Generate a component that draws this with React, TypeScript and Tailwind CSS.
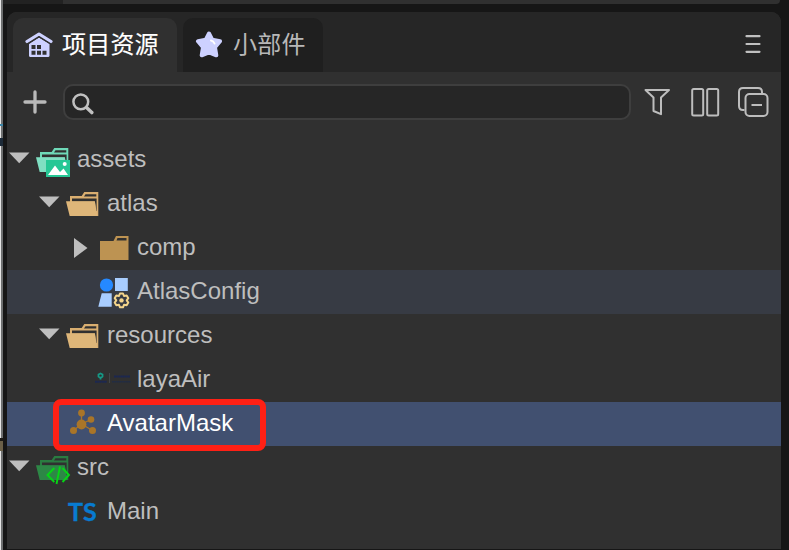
import React from "react";

type RowProps = {
  label: string;
  indent: string;
  arrow?: "open" | "closed";
  icon: React.ReactNode;
  tone?: string;
};

const Icon = ({ children }: { children: React.ReactNode }) => (
  <svg className="h-11 w-10 shrink-0" viewBox="0 0 40 44">{children}</svg>
);

const OpenFolder = ({ back, front }: { back: string; front: string }) => (
  <>
    <path fill={back} fillRule="evenodd" d="M7 14H18.700L21.300 10H35.300V34H10L7 20ZM22.500 12.200L21 14.500H33.300V12.200ZM9 16.400V19.500H32L33 29H33.600V16.400Z" />
    <path fill={front} d="M3 19.300H31.800L34.300 34H6.700Z" />
  </>
);

const AssetsIcon = () => (
  <Icon>
    <OpenFolder back="#6fd9b8" front="#7fdfc2" />
    <path fill="#26c795" d="M13 22H37V39H13Z" />
    <path fill="#fff" d="M15 37L22 27.500L27 34L30.500 30.500L35 37Z" />
    <circle cx="31.700" cy="26" r="2" fill="#fff" />
  </Icon>
);

const TanFolderIcon = () => (
  <Icon><OpenFolder back="#d9ae70" front="#deb679" /></Icon>
);

const ClosedFolderIcon = () => (
  <Icon>
    <path fill="#bd9352" fillRule="evenodd" d="M7 15H20.500L23 10H35.500V34H7ZM24.500 12L23.500 14.500H33.500V12Z" />
  </Icon>
);

const AtlasIcon = () => (
  <Icon>
    <circle cx="13.500" cy="15" r="6.600" fill="#2589ff" />
    <path fill="#a8cdff" d="M22 8H34.800V21H22ZM8.700 23.200H18.700V36.800H5.300Z" />
    <path fill="none" stroke="#f4d58b" strokeWidth="2" strokeLinejoin="round" d="M27 23.500H30L31 26L33.700 25.600L35.300 28.200L33.700 30.400L35.300 32.600L33.700 35.200L31 34.800L30 37.300H27L26 34.800L23.300 35.200L21.700 32.600L23.300 30.400L21.700 28.200L23.300 25.600L26 26Z" />
    <circle cx="28.500" cy="30.400" r="2.200" fill="#f4d58b" />
  </Icon>
);

const LayaIcon = () => (
  <Icon>
    <path fill="none" stroke="#159986" strokeWidth="1.800" d="M7.500 21.500V20L5.500 18.500V16.500L7.500 15.500L9.500 16.500V18.500L7.500 20" />
    <path stroke="#1b2752" strokeWidth="2" strokeDasharray="2 .3" d="M2 23.800H14M21 18.400H37" />
    <path stroke="#202c46" strokeWidth="1.500" strokeDasharray="1.500 .4" d="M19 23.800H38" />
    <path stroke="#42464a" strokeWidth="1" d="M16.500 15V25" />
  </Icon>
);

const MaskIcon = () => (
  <Icon>
    <path fill="none" stroke="#a97528" strokeWidth="1.300" d="M18.500 11V22L28 17.500M18.500 22L10.500 28.500M18.500 22L29.500 28.500" />
    <g fill="#a97528">
      <circle cx="18.500" cy="22.500" r="4.900" />
      <circle cx="18.500" cy="11" r="3.400" />
      <circle cx="28" cy="17.500" r="3.300" />
      <circle cx="10.500" cy="28.500" r="3.500" />
      <circle cx="29.500" cy="28.500" r="3.500" />
    </g>
  </Icon>
);

const SrcIcon = () => (
  <Icon>
    <OpenFolder back="#2a7c41" front="#2d8746" />
    <path fill="none" stroke="#06d615" strokeWidth="1.900" d="M21.300 22L14.500 29L21.300 36M29.500 22L36 29L29.500 36M27 20.500L23.500 38" />
  </Icon>
);

const TsIcon = () => (
  <div className="flex h-11 w-10 shrink-0 items-center pb-0.5 pl-[5px] font-[Lato,sans-serif] text-[25px] font-bold leading-none text-[#087bd0] [-webkit-text-stroke:0.4px_#087bd0]">TS</div>
);

const Row = ({ label, indent, arrow, icon, tone = "text-[#bebebe]" }: RowProps) => (
  <div className={`flex h-11 w-full shrink-0 items-center ${indent} ${tone}`}>
    <svg className="h-11 w-[26px] shrink-0" viewBox="0 0 26 44" fill="#bebebe">
      {arrow === "open" && <path d="M2 14.500H22.500L12.200 25.300Z" />}
      {arrow === "closed" && <path d="M7 12V32L20.500 22Z" />}
    </svg>
    {icon}
    <span className="-mt-0.5 ml-1 text-2xl leading-none">{label}</span>
  </div>
);

export default function App() {
  return (
    <div className="relative flex h-[550px] w-[789px] overflow-hidden bg-[#161616] font-['Liberation_Sans','Noto_Sans_CJK_SC',sans-serif]">
      <div className="flex h-full w-[3px] shrink-0 flex-col border-r-2 border-[#6d6f70] bg-[#e5e5e5]">
        <div className="mt-[124px] h-0.5 w-[3px] shrink-0 bg-[#3b86a8]" />
        <div className="mt-3 h-2 w-[3px] shrink-0 bg-[#1c2a38]" />
        <div className="mt-[292px] h-[3px] w-[3px] shrink-0 bg-[#1c1a17]" />
        <div className="h-2.5 w-[3px] shrink-0 bg-[#6b6048]" />
      </div>
      <div className="flex min-w-0 flex-1 flex-col">
        <div className="flex h-1 w-[777px] shrink-0 overflow-hidden rounded-br bg-[#303030]">
          <div className="w-[60px] bg-[#222222]" />
        </div>
        <main className="ml-1 mt-2 flex h-[537px] w-[774px] shrink-0 flex-col overflow-hidden rounded-t-[10px] bg-[#303030]">
          <header className="flex h-[60px] shrink-0 items-end bg-[#262626] pl-1.5">
            <div className="flex h-[54px] w-[164px] items-center rounded-t-[10px] bg-[#303030] pl-3 text-white">
              <svg className="size-7" viewBox="0 0 28 28">
                <path d="M2 10.500L14 3L26 10.500" fill="none" stroke="#cdd1ff" strokeWidth="3.200" strokeLinecap="round" strokeLinejoin="round" />
                <path fill="#cdd1ff" d="M14 6.500L24.500 13V24.500Q24.500 26 23 26H5.500Q4 26 4 24.500V13Z" />
                <path fill="none" stroke="#303030" strokeWidth="1" d="M2.500 13L14 6L25.500 13" />
                <path fill="#303030" d="M6.500 14H10.500V18H6.500ZM12 14H16V18H12ZM6.500 19.700H10.500V23.700H6.500ZM12 19.700H16V23.700H12ZM17.500 19.700H21.500V23.700H17.500Z" />
              </svg>
              <span className="ml-[9px] text-2xl leading-9 tracking-[0.2px] [-webkit-text-stroke:0.15px_white]">项目资源</span>
            </div>
            <div className="ml-1.5 flex h-[54px] w-[140px] items-center rounded-t-[10px] bg-[#1f1f1f] pl-3 text-[#b8b8b8]">
              <svg className="size-7" viewBox="0 0 28 28">
                <path d="M14 2.500L17.200 8.700L25 10.300L20 16.300L21.300 24.300L14 21.300L6.700 24.300L8 16.300L3 10.300L10.800 8.700Z" fill="#cdd1ff" stroke="#cdd1ff" strokeWidth="4" strokeLinejoin="round" />
                <path d="M16 9.500Q18.500 10 19.500 12.500" fill="none" stroke="#fff" strokeWidth="2" strokeLinecap="round" />
              </svg>
              <span className="ml-[10px] text-2xl leading-9 tracking-[0.2px]">小部件</span>
            </div>
            <svg className="mb-[15px] ml-auto mr-5 h-6 w-4" viewBox="0 0 16 24" stroke="#c0c0c0" strokeWidth="2.200" strokeLinecap="round">
              <path d="M1.500 3.200H14.500M1.500 11H14.500M1.500 18.800H14.500" />
            </svg>
          </header>
          <div className="flex h-[66px] shrink-0 items-start pl-4 pt-3">
            <svg className="mt-1.5 size-6 shrink-0" viewBox="0 0 24 24" stroke="#b9b9b9" strokeWidth="3.300" strokeLinecap="round">
              <path d="M2 12H22M12 2V22" />
            </svg>
            <div className="ml-4 flex h-9 w-[568px] shrink-0 items-center rounded-[10px] border-2 border-[#3e3e3e] bg-[#262626] pl-1.5">
              <svg className="mt-0.5 size-6" viewBox="0 0 24 24" fill="none" stroke="#c0c0c0">
                <circle cx="9.800" cy="10.800" r="7.400" strokeWidth="2.500" />
                <path d="M15.800 16.800L20.800 21.600" strokeWidth="3.500" strokeLinecap="round" />
              </svg>
            </div>
            <svg className="ml-3 h-9 w-[126px] shrink-0" viewBox="0 0 126 36" fill="none" stroke="#bdbdbd" strokeWidth="2">
              <path d="M2.500 6H26L18 13.500V30.200L10.500 27V13.500Z" strokeLinejoin="round" />
              <rect x="49.200" y="5" width="11" height="26.500" rx="1.500" />
              <rect x="64.200" y="5" width="11" height="26.500" rx="1.500" />
              <path d="M101.500 26H100Q96 26 96 22V8Q96 4 100 4H115Q119 4 119 8V9.500" />
              <rect x="102.500" y="10" width="22" height="22" rx="4" />
              <path d="M108.500 21H119" />
            </svg>
          </div>
          <Row indent="pl-0" label="assets" arrow="open" icon={<AssetsIcon />} />
          <Row indent="pl-[30px]" label="atlas" arrow="open" icon={<TanFolderIcon />} />
          <Row indent="pl-[60px]" label="comp" arrow="closed" icon={<ClosedFolderIcon />} />
          <Row indent="pl-[60px]" label="AtlasConfig" icon={<AtlasIcon />} tone="bg-[#373b44] text-[#bebebe]" />
          <Row indent="pl-[30px]" label="resources" arrow="open" icon={<TanFolderIcon />} />
          <Row indent="pl-[60px]" label="layaAir" icon={<LayaIcon />} />
          <Row indent="pl-[30px]" label="AvatarMask" icon={<MaskIcon />} tone="bg-[#415070] text-white" />
          <Row indent="pl-0" label="src" arrow="open" icon={<SrcIcon />} />
          <Row indent="pl-[30px]" label="Main" icon={<TsIcon />} />
        </main>
      </div>
      <div className="absolute left-[53px] top-[399px] h-[52px] w-[213px] rounded-lg border-[6px] border-[#ff2015]" />
    </div>
  );
}
